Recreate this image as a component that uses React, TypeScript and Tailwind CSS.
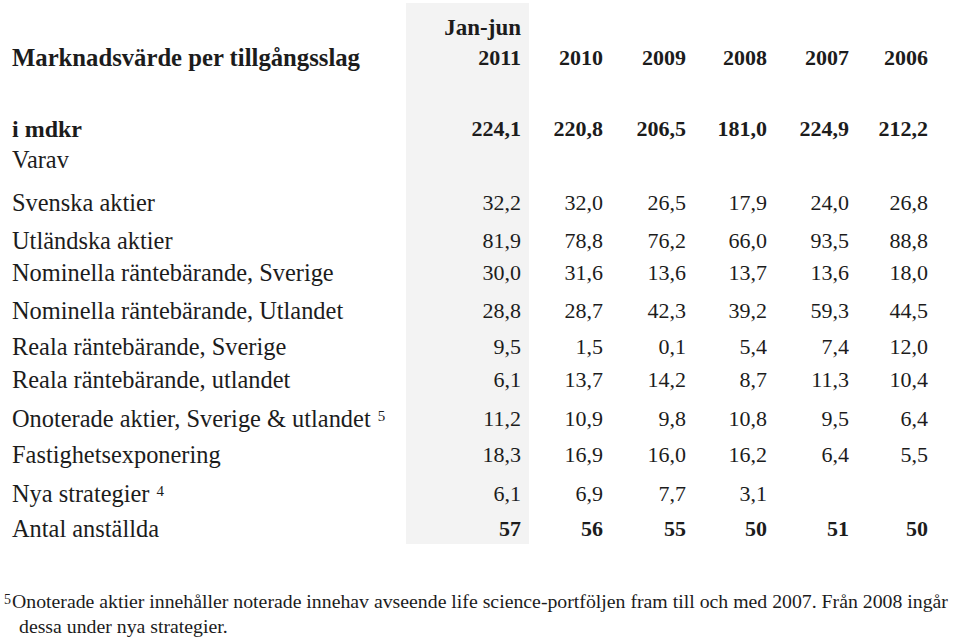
const years = ["2010", "2009", "2008", "2007", "2006"];

// pt = gap above the 30px text line in each row
const rows = [
  { label: "i mdkr", bold: true, pt: "pt-px", values: ["224,1", "220,8", "206,5", "181,0", "224,9", "212,2"] },
  { label: "Varav", pt: "pt-px", values: ["", "", "", "", "", ""] },
  { label: "Svenska aktier", pt: "pt-[13px]", values: ["32,2", "32,0", "26,5", "17,9", "24,0", "26,8"] },
  { label: "Utländska aktier", pt: "pt-[8px]", values: ["81,9", "78,8", "76,2", "66,0", "93,5", "88,8"] },
  { label: "Nominella räntebärande, Sverige", pt: "pt-[2px]", values: ["30,0", "31,6", "13,6", "13,7", "13,6", "18,0"] },
  { label: "Nominella räntebärande, Utlandet", pt: "pt-[8px]", values: ["28,8", "28,7", "42,3", "39,2", "59,3", "44,5"] },
  { label: "Reala räntebärande, Sverige", pt: "pt-[6px]", values: ["9,5", "1,5", "0,1", "5,4", "7,4", "12,0"] },
  { label: "Reala räntebärande, utlandet", pt: "pt-[3px]", values: ["6,1", "13,7", "14,2", "8,7", "11,3", "10,4"] },
  { label: "Onoterade aktier, Sverige & utlandet", note: "5", pt: "pt-[9px]", values: ["11,2", "10,9", "9,8", "10,8", "9,5", "6,4"] },
  { label: "Fastighetsexponering", pt: "pt-[6px]", values: ["18,3", "16,9", "16,0", "16,2", "6,4", "5,5"] },
  { label: "Nya strategier", note: "4", pt: "pt-[9px]", values: ["6,1", "6,9", "7,7", "3,1", "", ""] },
  { label: "Antal anställda", boldValues: true, pt: "pt-[5px]", values: ["57", "56", "55", "50", "51", "50"] },
];

const colW = ["w-[74px]", "w-[83px]", "w-[81px]", "w-[82px]", "w-[79px]"];

export default function App() {
  return (
    <div className="w-[960px] h-[637px] bg-white text-[#1c1c1c] overflow-hidden" style={{ fontFamily: '"Liberation Serif", serif' }}>
      <div className="pt-[3px] flex flex-col">
        {/* header */}
        <div className="flex h-[110px]">
          <div className="w-[406px] pl-3 pt-[40px] text-[24.7px] font-bold leading-[30px] whitespace-nowrap">
            Marknadsvärde per tillgångsslag
          </div>
          <div className="w-[123px] bg-[#f3f3f3] pr-2 pt-[10px] text-right text-[22px] font-bold leading-[30px]">
            <div className="text-[23px]">Jan-jun</div>
            <div>2011</div>
          </div>
          {years.map((y, i) => (
            <div key={y} className={`${colW[i]} pt-[40px] text-right text-[22px] font-bold leading-[30px]`}>
              {y}
            </div>
          ))}
        </div>

        {rows.map((r) => (
          <div key={r.label} className="flex">
            <div className={`w-[406px] pl-3 ${r.pt} h-auto whitespace-nowrap leading-[30px] ${r.bold ? "font-bold text-[24px]" : "text-[24.4px]"}`}>
              {r.label}
              {r.note && <span className="ml-[7px] text-[15px] leading-none relative -top-[6px]">{r.note}</span>}
            </div>
            <div className={`w-[123px] bg-[#f3f3f3] pr-2 ${r.pt} text-right text-[22px] leading-[30px] ${r.bold || r.boldValues ? "font-bold" : ""}`}>
              {r.values[0]}
            </div>
            {r.values.slice(1).map((v, i) => (
              <div key={i} className={`${colW[i]} ${r.pt} text-right text-[22px] leading-[30px] ${r.bold || r.boldValues ? "font-bold" : ""}`}>
                {v}
              </div>
            ))}
          </div>
        ))}

        {/* footnote */}
        <div className="mt-[45px] pl-[4px] text-[19.8px] leading-[25px] whitespace-nowrap">
          <div>
            <span className="text-[14px] leading-none relative -top-[4px]">5</span>
            <span className="ml-px">Onoterade aktier innehåller noterade innehav avseende life science-portföljen fram till och med 2007. Från 2008 ingår</span>
          </div>
          <div className="pl-[15px]">dessa under nya strategier.</div>
        </div>
      </div>
    </div>
  );
}
